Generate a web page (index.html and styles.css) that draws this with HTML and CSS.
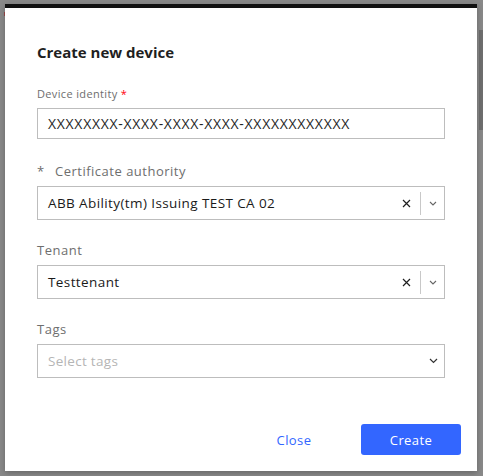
FILE: index.html
```html
<!DOCTYPE html>
<html>
<head>
<meta charset="utf-8">
<link rel="stylesheet" href="styles.css">
</head>
<body>
<div class="backdrop-ghost">
  <span class="ghost-mark"></span>
  <span class="ghost-bar"></span>
</div>
<div class="modal">
  <h1 class="title">Create new device</h1>

  <div class="field first">
    <label class="label small">Device identity <span class="req">*</span></label>
    <div class="input">XXXXXXXX-XXXX-XXXX-XXXX-XXXXXXXXXXXX</div>
  </div>

  <div class="field">
    <label class="label"><span class="star">*</span>Certificate authority</label>
    <div class="select">
      <span class="value">ABB Ability(tm) Issuing TEST CA 02</span>
      <span class="clear"><svg width="9" height="9" viewBox="0 0 9 9"><path d="M1 1L8 8M8 1L1 8" stroke="#1f1f1f" stroke-width="1.2" fill="none"/></svg></span>
      <span class="sep"></span>
      <span class="chev"><svg width="8" height="5" viewBox="0 0 8 5"><path d="M1 1L4 4L7 1" stroke="#666" stroke-width="1.1" fill="none"/></svg></span>
    </div>
  </div>

  <div class="field">
    <label class="label">Tenant</label>
    <div class="select">
      <span class="value">Testtenant</span>
      <span class="clear"><svg width="9" height="9" viewBox="0 0 9 9"><path d="M1 1L8 8M8 1L1 8" stroke="#1f1f1f" stroke-width="1.2" fill="none"/></svg></span>
      <span class="sep"></span>
      <span class="chev"><svg width="8" height="5" viewBox="0 0 8 5"><path d="M1 1L4 4L7 1" stroke="#666" stroke-width="1.1" fill="none"/></svg></span>
    </div>
  </div>

  <div class="field">
    <label class="label">Tags</label>
    <div class="select">
      <span class="value placeholder">Select tags</span>
      <span class="chev"><svg width="9" height="6" viewBox="0 0 9 6"><path d="M1 1L4.5 4.5L8 1" stroke="#333" stroke-width="1.2" fill="none"/></svg></span>
    </div>
  </div>

  <div class="footer">
    <button class="btn btn-link">Close</button>
    <button class="btn btn-primary">Create</button>
  </div>
</div>
</body>
</html>
```

FILE: styles.css
```css
* { box-sizing: border-box; }
html, body { margin: 0; padding: 0; }
body {
  width: 483px;
  height: 476px;
  overflow: hidden;
  background: #898989;
  font-family: "Open Sans", "Liberation Sans", sans-serif;
  padding: 4px 0 0 5px;
  position: relative;
}
.backdrop-ghost { position: absolute; inset: 0; pointer-events: none; }
.ghost-mark { position: absolute; left: 4px; top: 12px; width: 2px; height: 4px; background: #9a4a4a; }
.ghost-bar { position: absolute; left: 479px; top: 30px; width: 4px; height: 100px; background: #6e6e6e; }

.modal {
  position: relative;
  width: 472px;
  height: 467px;
  background: #fff;
  border-top: 4px solid #111;
  padding: 34px 32px 0 32px;
  display: flex;
  flex-direction: column;
  box-shadow: 0 2px 6px rgba(0,0,0,0.25);
}
.title {
  margin: 0 0 23px 0;
  font-size: 15px;
  line-height: 20px;
  font-weight: 700;
  color: #1f1f1f;
}
.field { display: flex; flex-direction: column; margin-bottom: 21px; }
.field.first { margin-bottom: 23px; }
.label {
  font-size: 13px;
  line-height: 18px;
  color: #6e6e6e;
  margin-bottom: 6px;
  letter-spacing: 0.5px;
}
.label.small { font-size: 11px; line-height: 18px; margin-bottom: 5px; letter-spacing: 0.35px; }
.req { color: #ff000f; }
.star { display: inline-block; width: 18px; }
.input {
  height: 31px;
  border: 1px solid #bdbdbd;
  padding: 0 10px;
  display: flex;
  align-items: center;
  font-size: 14px;
  letter-spacing: 0.7px;
  color: #1f1f1f;
}
.select {
  height: 34px;
  border: 1px solid #bdbdbd;
  display: flex;
  align-items: center;
  padding-left: 10px;
  font-size: 13.5px;
  letter-spacing: 0.4px;
  color: #1a1a1a;
}
.value { flex: 1; }
.placeholder { color: #b5b5b5; letter-spacing: 0.3px; }
.clear { width: 20px; display: flex; justify-content: center; }
.sep { width: 1px; height: 23px; background: #c8c8c8; margin: 0 3px 0 4px; }
.chev { width: 20px; display: flex; justify-content: center; padding-right: 2px; }
.footer {
  margin-top: auto;
  margin-bottom: 16px;
  margin-right: -16px;
  display: flex;
  justify-content: flex-end;
  gap: 17px;
}
.btn {
  font-family: inherit;
  font-size: 13px;
  letter-spacing: 0.4px;
  height: 31px;
  width: 100px;
  border-radius: 3px;
  border: none;
  cursor: pointer;
}
.btn-link { background: transparent; color: #3366ff; }
.btn-primary { background: #3366ff; color: #fff; }
```
